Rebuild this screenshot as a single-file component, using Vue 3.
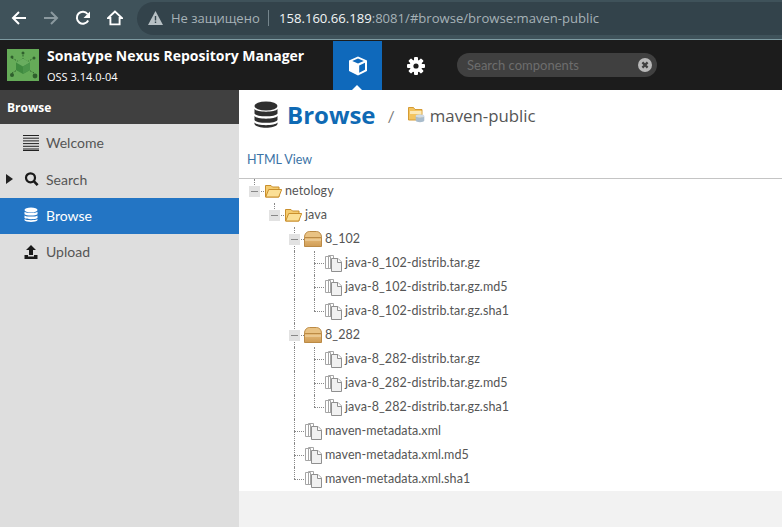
<script setup>
const navItems = [
  { label: 'Welcome', icon: 'welcome' },
  { label: 'Search', icon: 'search', arrow: true },
  { label: 'Browse', icon: 'browse', active: true },
  { label: 'Upload', icon: 'upload' }
]

const gearTeeth = [0, 45, 90, 135]

const files = (version) => ['', '.md5', '.sha1'].map((ext, index) => ({
  name: `java-8_${version}-distrib.tar.gz${ext}`,
  depth: 3,
  icon: 'file',
  through: [2],
  last: index === 2
}))

const rows = [
  { name: 'netology', depth: 0, icon: 'folder', toggle: true, last: true },
  { name: 'java', depth: 1, icon: 'folder', toggle: true, last: true },
  { name: '8_102', depth: 2, icon: 'box', toggle: true },
  ...files('102'),
  { name: '8_282', depth: 2, icon: 'box', toggle: true },
  ...files('282'),
  { name: 'maven-metadata.xml', depth: 2, icon: 'file' },
  { name: 'maven-metadata.xml.md5', depth: 2, icon: 'file' },
  { name: 'maven-metadata.xml.sha1', depth: 2, icon: 'file', last: true }
]

function levels(row) {
  return Array.from({ length: row.depth }, (_, level) => level)
}
</script>

<template>
  <div class="page">
    <div class="chrome">
      <div class="chrome-buttons">
        <svg width="16" height="16" viewBox="0 0 16 16"><path d="M15 8H2M8 2 2 8l6 6" fill="none" stroke="#fff" stroke-width="2"/></svg>
        <svg width="16" height="16" viewBox="0 0 16 16"><path d="M1 8h13M8 2l6 6-6 6" fill="none" stroke="#8b999f" stroke-width="2"/></svg>
        <svg width="16" height="16" viewBox="0 0 16 16"><path d="M13.2 10.5A6 6 0 1 1 12.6 4" fill="none" stroke="#fff" stroke-width="2"/><path d="M15 1.500V8H8.500z" fill="#fff"/></svg>
        <svg width="16" height="16" viewBox="0 0 16 16"><path d="M8 1.500 1 8h2.400v6.400h9.200V8H15z" fill="none" stroke="#fff" stroke-width="1.900"/></svg>
      </div>
      <div class="address">
        <svg width="15" height="14" viewBox="0 0 15 14"><path d="M7.500 0 15 14H0z" fill="#b7c0c4"/><path d="M6.800 5h1.400v4.600H6.800zM6.800 10.500h1.400V12H6.800z" fill="#35454d"/></svg>
        <span class="insecure">Не защищено</span>
        <i class="address-sep"></i>
        <span class="url"><b>158.160.66.189</b>:8081/#browse/browse:maven-public</span>
      </div>
    </div>

    <header class="topbar">
      <div class="brand">
        <svg class="logo" width="32" height="32" viewBox="0 0 32 32">
          <rect width="32" height="32" fill="#65ab58"/>
          <path d="M16 3v8M5 9l7 4M27 9l-7 4M5 24l7-4M27 24l-7-4" stroke="#2f5f2d" stroke-width="1" stroke-dasharray="1.500 1.500"/>
          <circle cx="16" cy="4" r="1.500" fill="#2f5f2d"/>
          <circle cx="5" cy="8" r="1.500" fill="#2f5f2d"/>
          <circle cx="27" cy="9" r="1.500" fill="#2f5f2d"/>
          <circle cx="5" cy="26" r="2" fill="#2f5f2d"/>
          <circle cx="28" cy="27" r="2.400" fill="#2f5f2d"/>
          <path d="M16 9.500 23 13.500v7.500L16 25l-7-4v-7.500z" fill="#3f8a3f"/>
          <path d="M16 9.500 23 13.500 16 17.500 9 13.500z" fill="#69ad5f"/>
          <path d="M16 17.500 23 13.500V21L16 25z" fill="#4b954a"/>
        </svg>
        <div class="brand-text">
          <strong>Sonatype Nexus Repository Manager</strong>
          <span>OSS 3.14.0-04</span>
        </div>
      </div>
      <button class="mode active" aria-label="Browse">
        <svg width="20" height="20" viewBox="0 0 20 20"><path d="M10 .5 19 4.500v10.500L10 19.500 1 15V4.500z" fill="#fff"/><path d="M10 2.500 15.800 5 10 7.500 4.200 5zM11.200 9.400 17 6.800v7L11.200 16.800z" fill="#0f69bb"/></svg>
      </button>
      <button class="mode" aria-label="Settings">
        <svg width="18" height="18" viewBox="0 0 18 18">
          <g fill="#fff">
            <circle cx="9" cy="9" r="6.300"/>
            <rect v-for="angle in gearTeeth" :key="angle" x="7" y="0" width="4" height="18" rx="1" :transform="`rotate(${angle} 9 9)`"/>
          </g>
          <circle cx="9" cy="9" r="2.600" fill="#1c1c1c"/>
        </svg>
      </button>
      <div class="search">
        <span>Search components</span>
        <svg width="14" height="14" viewBox="0 0 14 14"><circle cx="7" cy="7" r="7" fill="#b9b9b9"/><path d="m4.400 4.400 5.200 5.200m0-5.200-5.200 5.200" stroke="#404040" stroke-width="2.200"/></svg>
      </div>
    </header>

    <div class="body">
      <aside class="sidebar">
        <h2>Browse</h2>
        <ul>
          <li v-for="item in navItems" :key="item.label" :class="{ active: item.active }">
            <i v-if="item.arrow" class="arrow"></i>
            <svg v-if="item.icon === 'welcome'" width="16" height="16" viewBox="0 0 16 16"><path d="M0 .500h16M0 3.200h16M0 5.900h16M0 8.600h16M0 11.300h16M0 14h16M0 15.500h16" stroke="#222" stroke-width="1"/></svg>
            <svg v-else-if="item.icon === 'search'" width="16" height="16" viewBox="0 0 16 16"><circle cx="7.500" cy="6.800" r="4.500" fill="none" stroke="#1a1a1a" stroke-width="2.200"/><path d="m10.800 10.200 3.800 4" stroke="#1a1a1a" stroke-width="2.600"/></svg>
            <svg v-else-if="item.icon === 'browse'" width="16" height="16" viewBox="0 0 16 16"><ellipse cx="8" cy="3" rx="6.500" ry="2.600" fill="#fff"/><path d="M1.500 4.700c1.500 1.600 11.500 1.600 13 0v2.600c-1.500 1.600-11.500 1.600-13 0zM1.500 8.400c1.500 1.600 11.500 1.600 13 0V11c-1.500 1.600-11.500 1.600-13 0zM1.500 12c1.500 1.600 11.500 1.600 13 0v1.300c-1.500 2.300-11.500 2.300-13 0z" fill="#fff"/></svg>
            <svg v-else width="16" height="16" viewBox="0 0 16 16"><path d="M8 1 13 6H10v5H6V6H3z" fill="#1a1a1a"/><path d="M1.500 11h3.500v1.600h6V11h3.500v4h-13z" fill="#1a1a1a"/></svg>
            <span>{{ item.label }}</span>
          </li>
        </ul>
      </aside>

      <main class="content">
        <div class="breadcrumb">
          <svg width="26" height="28" viewBox="0 0 26 28"><ellipse cx="13" cy="5" rx="11.500" ry="4.500" fill="#2f2f2f"/><path d="M1.500 8c2 3.500 21 3.500 23 0v4.500c-2 3.800-21 3.800-23 0zM1.500 15c2 3.500 21 3.500 23 0v4c-2 3.800-21 3.800-23 0zM1.500 21.500c2 3.500 21 3.500 23 0v1.500c-2 5-21 5-23 0z" fill="#2f2f2f"/></svg>
          <h1>Browse</h1>
          <span class="slash">/</span>
          <svg width="17" height="16" viewBox="0 0 17 16"><path d="M.5 .5h5l1.500 2h7v10.500H.5z" fill="#f3c45f" stroke="#d59b34"/><path d="M2 4h11.500v3H2z" fill="#fbe8b5"/><ellipse cx="12" cy="9" rx="4.300" ry="1.800" fill="#cfdbe6"/><path d="M7.700 9v4.500c0 2.200 8.600 2.200 8.600 0V9c0 2.200-8.600 2.200-8.600 0z" fill="#a9bccc"/></svg>
          <span class="crumb">maven-public</span>
        </div>
        <div class="html-view"><a>HTML View</a></div>

        <div class="tree">
          <div v-for="row in rows" :key="row.name" class="row">
            <i v-for="level in levels(row)" :key="level" class="indent" :class="{ through: row.through && row.through.includes(level) }"></i>
            <i class="joint" :class="{ last: row.last }">
              <b v-if="row.toggle" class="toggle"></b>
            </i>
            <svg v-if="row.icon === 'folder'" class="node-icon" width="17" height="14" viewBox="0 0 17 14">
              <path d="M.5 13V1.500h5.500l1.500 1.500h6.500v10z" fill="#f5cc70" stroke="#c98f2c"/>
              <path d="M.7 13 3.700 5.500h13L13.700 13z" fill="#fbdf95" stroke="#c98f2c"/>
            </svg>
            <svg v-else-if="row.icon === 'box'" class="node-icon box" width="18" height="16" viewBox="0 0 18 16">
              <defs>
                <linearGradient id="boxBody" x1="0" y1="0" x2="0" y2="1">
                  <stop offset="0" stop-color="#e6bb78"/>
                  <stop offset="1" stop-color="#cf9c55"/>
                </linearGradient>
              </defs>
              <path d="M.5 6.500C.5 2.500 3 .5 5.500 .5h7c2.500 0 5 2 5 6z" fill="#e9c283" stroke="#bb8a45"/>
              <path d="M.5 6.500h17v9H.5z" fill="url(#boxBody)" stroke="#bb8a45"/>
              <path d="M1 9h16" stroke="#f4dcb0"/>
            </svg>
            <svg v-else class="node-icon" width="17" height="17" viewBox="0 0 17 17">
              <path d="M.5 1.500h5v12h-5zM3.500 .5h5v13h-5z" fill="#fff" stroke="#a5a5a5"/>
              <path d="M6.500 3.500h6.500l3.500 3.500v9.500h-10z" fill="#f1f1f1" stroke="#8f8f8f"/>
              <path d="M12.500 3.500V7.500h4" fill="#fff" stroke="#8f8f8f"/>
            </svg>
            <span class="node-label">{{ row.name }}</span>
          </div>
        </div>
        <div class="footer-space"></div>
      </main>
    </div>
  </div>
</template>

<style>
html, body {
  margin: 0;
  background: #fff;
}
</style>

<style scoped>
.page {
  width: 782px;
  height: 527px;
  overflow: hidden;
  display: flex;
  flex-direction: column;
  font-family: Lato, "Liberation Sans", sans-serif;
}

.chrome {
  height: 36px;
  padding-bottom: 3px;
  flex: none;
  display: flex;
  align-items: center;
  background: #3f525a;
  border-bottom: 1px solid #7d9aa1;
}

.chrome-buttons {
  width: 137px;
  padding-left: 11px;
  box-sizing: border-box;
  display: flex;
  gap: 16px;
}

.address {
  flex: 1;
  height: 33px;
  display: flex;
  align-items: center;
  padding-left: 11px;
  background: #33434b;
  border-radius: 17px 0 0 17px;
  font: 13px "Open Sans", sans-serif;
  color: #a6b2b7;
}

.insecure {
  margin-left: 8px;
  width: 90px;
  white-space: nowrap;
}

.address-sep {
  width: 1px;
  height: 16px;
  margin: 0 10px 0 7px;
  background: #75858c;
}

.url {
  white-space: nowrap;
  font-size: 13.100px;
}

.url b {
  font-weight: 400;
  color: #f2f5f6;
}

.topbar {
  height: 50px;
  flex: none;
  display: flex;
  align-items: center;
  background: #1c1c1c;
}

.brand {
  width: 333px;
  padding-left: 7px;
  box-sizing: border-box;
  display: flex;
  align-items: center;
  gap: 8px;
}

.brand-text {
  display: flex;
  flex-direction: column;
  color: #fff;
  font-family: "Open Sans", sans-serif;
  white-space: nowrap;
}

.brand-text strong {
  font-size: 14px;
  line-height: 20px;
  font-weight: 700;
}

.brand-text span {
  margin-top: 4px;
  font-size: 11px;
  line-height: 14px;
}

.mode {
  position: relative;
  width: 49px;
  height: 49px;
  margin-top: 1px;
  padding: 0;
  border: 0;
  background: none;
  display: flex;
  align-items: center;
  justify-content: center;
}

.mode + .mode {
  margin-left: 9px;
}

.mode.active {
  background: #0f69bb;
}

.mode.active::after {
  content: "";
  position: absolute;
  left: 19px;
  bottom: 0;
  border: 5px solid transparent;
  border-top: 0;
  border-bottom-color: #fff;
}

.search {
  width: 200px;
  height: 24px;
  margin-left: 17px;
  padding: 0 5px 0 10px;
  box-sizing: border-box;
  display: flex;
  align-items: center;
  justify-content: space-between;
  border-radius: 12px;
  background: #404040;
  font-size: 13px;
  color: #6d6d6d;
}

.body {
  flex: 1;
  min-height: 0;
  display: flex;
}

.sidebar {
  width: 239px;
  flex: none;
  background: #dedede;
  color: #555;
  font-size: 14px;
}

.sidebar h2 {
  margin: 0;
  height: 34px;
  padding-left: 7px;
  background: #404040;
  color: #fff;
  font: 700 12px/35px "Open Sans", sans-serif;
  box-sizing: border-box;
}

.sidebar ul {
  margin: 0;
  padding: 1px 0 0;
  list-style: none;
}

.sidebar li {
  position: relative;
  height: 36.400px;
  box-sizing: border-box;
  padding: 0 0 1px 23px;
  display: flex;
  align-items: center;
  gap: 7px;
}

.sidebar li.active {
  background: #2375c4;
  color: #fff;
}

.arrow {
  position: absolute;
  left: 6px;
  top: 13px;
  border: 5px solid transparent;
  border-right: 0;
  border-left: 7px solid #222;
}

.content {
  flex: 1;
  min-width: 0;
  display: flex;
  flex-direction: column;
  background: #fff;
}

.breadcrumb {
  height: 50px;
  padding-left: 14px;
  display: flex;
  align-items: center;
}

.breadcrumb h1 {
  margin: -1px 0 0 8px;
  font: 700 24px "Open Sans", sans-serif;
  color: #0f6ab4;
}

.slash {
  margin: 0 13px 0 12px;
  color: #777;
  font-size: 16px;
}

.crumb {
  margin: 1px 0 0 5px;
  font: 16.800px "Open Sans", sans-serif;
  color: #555;
}

.html-view {
  height: 39px;
  box-sizing: border-box;
  padding: 12px 0 0 8px;
  border-bottom: 1px solid #c4c4c4;
  font-size: 12.500px;
  line-height: 16px;
  color: #3b73a6;
}

.tree {
  padding-left: 5px;
}

.row {
  height: 24px;
  display: flex;
  align-items: center;
  color: #555;
  font-size: 12.500px;
  letter-spacing: .08px;
}

.indent,
.joint {
  position: relative;
  flex: none;
  width: 20px;
  height: 24px;
}

.indent.through::before,
.joint::before {
  content: "";
  position: absolute;
  left: 10px;
  top: 0;
  bottom: 0;
  border-left: 1px dotted #888;
}

.joint.last::before {
  bottom: 12px;
}

.joint::after {
  content: "";
  position: absolute;
  left: 10px;
  right: 0;
  top: 12px;
  border-top: 1px dotted #888;
}

.toggle {
  position: absolute;
  z-index: 1;
  left: 5px;
  top: 7px;
  width: 11px;
  height: 11px;
  background: linear-gradient(#888, #888) center / 7px 1px no-repeat #e2e2e2;
}

.node-icon {
  flex: none;
  margin-left: 1px;
}

.node-icon.box {
  margin-left: 0;
}

.node-label {
  margin: -2px 0 0 3px;
  white-space: nowrap;
}

.footer-space {
  flex: 1;
  background: #f2f2f2;
}
</style>
